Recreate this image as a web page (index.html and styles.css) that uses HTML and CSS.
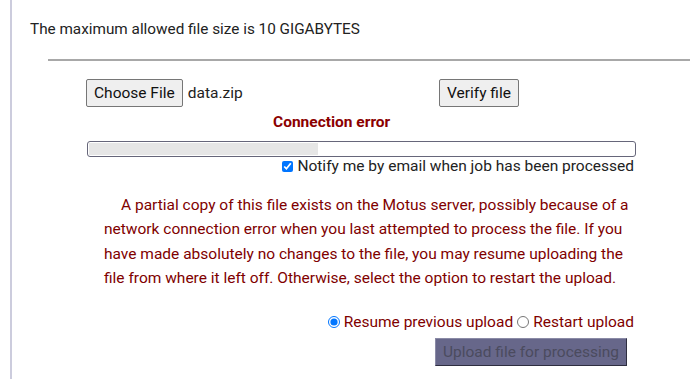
FILE: index.html
```html
<!DOCTYPE html>
<html lang="en">
  <head>
    <meta charset="UTF-8" />
    <meta name="viewport" content="width=device-width, initial-scale=1.0" />
    <title>Upload</title>
    <link rel="stylesheet" href="styles.css">
  </head>
  <body>
    <div class="panel">
      <p class="limit">The maximum allowed file size is 10 GIGABYTES</p>
      <div class="upload">
        <div class="form">
          <div class="file-row">
            <div class="picker">
              <button class="btn">Choose File</button>
              <span class="filename">data.zip</span>
            </div>
            <button class="btn">Verify file</button>
          </div>
          <div class="status">Connection error</div>
          <div class="progress"><div class="progress-fill" style="width: 42%"></div></div>
          <label class="notify"><input type="checkbox" checked> Notify me by email when job has been processed</label>
          <p class="message">A partial copy of this file exists on the Motus server, possibly because of a network connection error when you last attempted to process the file. If you have made absolutely no changes to the file, you may resume uploading the file from where it left off. Otherwise, select the option to restart the upload.</p>
          <div class="choices">
            <label><input type="radio" name="mode" checked> Resume previous upload</label>
            <label><input type="radio" name="mode"> Restart upload</label>
          </div>
          <div class="submit-row">
            <button class="submit" disabled>Upload file for processing</button>
          </div>
        </div>
      </div>
    </div>
  </body>
</html>
```

FILE: styles.css
```css
* {
  margin: 0;
  padding: 0;
  box-sizing: border-box;
}

body {
  font-family: Roboto, "Liberation Sans", sans-serif;
  font-size: 15.5px;
  color: #222;
  background: #fff;
  height: 379px;
  overflow: hidden;
}

.panel {
  margin-left: 10px;
  border-left: 2px solid #ccccdd;
  padding-left: 18px;
  min-height: 379px;
}

.limit {
  padding-top: 19px;
  line-height: 20px;
  font-size: 15.3px;
}

.upload {
  margin-top: 20px;
  margin-left: 18px;
  border-top: 2px solid #a8a8a8;
}

.form {
  width: 550px;
  margin-left: 38px;
  padding-top: 18px;
}

.file-row {
  display: flex;
  align-items: center;
}

.picker {
  width: 353px;
  display: flex;
  align-items: center;
  gap: 5px;
}

.btn {
  font-family: inherit;
  font-size: 15.5px;
  color: #111;
  background: #efefef;
  border: 1px solid #767676;
  border-radius: 2px;
  height: 28px;
  padding: 0 7px;
}

.status {
  color: #8b0000;
  font-weight: bold;
  margin-top: 5px;
  margin-left: 187px;
  line-height: 20px;
}

.progress {
  margin-top: 9px;
  margin-left: 1px;
  height: 16px;
  border: 1px solid #66667a;
  border-radius: 3px;
  padding: 1px;
}

.progress-fill {
  height: 100%;
  background: #e6e6e6;
}

.notify {
  display: flex;
  justify-content: flex-end;
  align-items: center;
  gap: 4px;
  margin-right: 2px;
  line-height: 18px;
}

.notify input {
  width: 11px;
  height: 11px;
  margin: 0;
}

.message {
  color: #800000;
  margin: 18px 2px 0 18px;
  text-indent: 17px;
  line-height: 24.3px;
}

.choices {
  display: flex;
  justify-content: flex-end;
  gap: 4px;
  margin-top: 22px;
  margin-right: 2px;
  color: #800000;
  line-height: 20px;
}

.choices label {
  display: flex;
  align-items: center;
  gap: 4px;
}

.choices input {
  width: 12px;
  height: 12px;
  margin: 0;
}

.submit-row {
  display: flex;
  justify-content: flex-end;
  margin-top: 6px;
  margin-right: 9px;
}

.submit {
  font-family: inherit;
  font-size: 15.5px;
  color: #4b4b5e;
  background: #67678a;
  border: 1px solid;
  border-color: #8a8aa6 #2e2e40 #2e2e40 #8a8aa6;
  height: 28px;
  width: 192px;
}
```
